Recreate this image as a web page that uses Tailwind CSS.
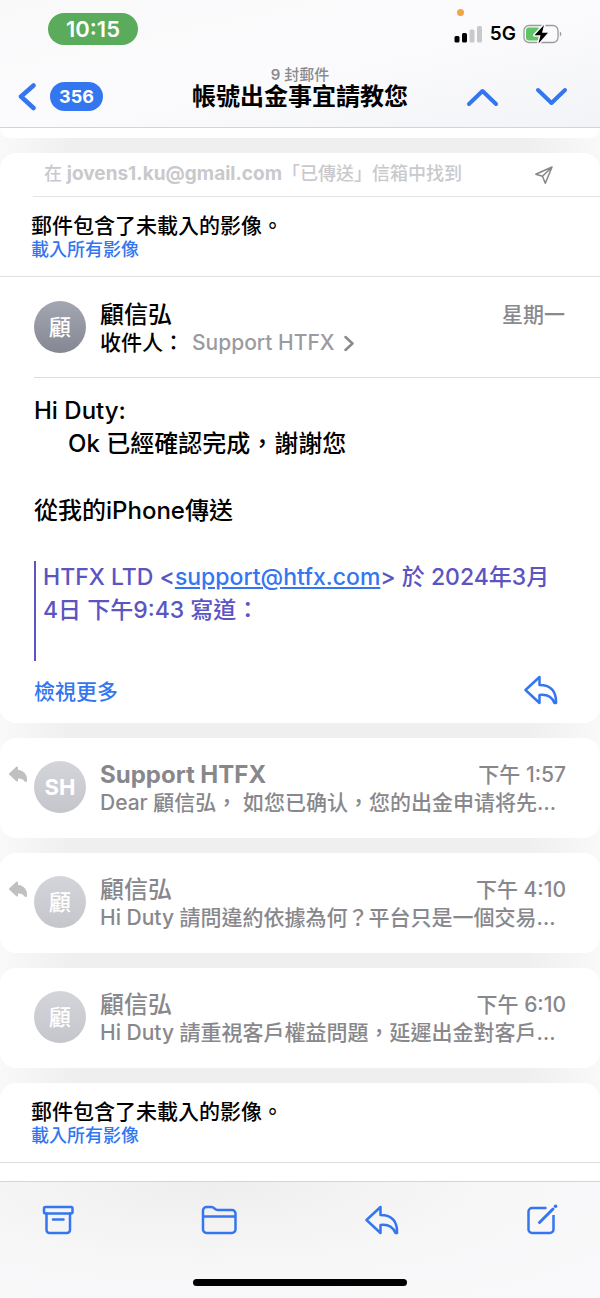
<!DOCTYPE html>
<html lang="zh-Hant">
<head>
  <meta charset="UTF-8" />
  <meta name="viewport" content="width=device-width, initial-scale=1.0" />
  <title>帳號出金事宜請教您</title>
  <script src="https://cdn.jsdelivr.net/npm/@tailwindcss/browser@4"></script>
</head>
<body class="h-screen flex flex-col bg-white text-black font-medium font-['Inter','Noto_Sans_CJK_TC',sans-serif]">

  <!-- Header -->
  <header class="shrink-0 border-b border-[#d4d4d6] bg-linear-to-br from-[#f9f9fa] via-[#fbfbfd] to-[#f3f4f7]">
    <!-- Status bar -->
    <div class="relative h-16 flex justify-between items-start pl-12 pr-[38px] pt-[13px]">
      <span class="w-[90px] h-8 rounded-full bg-[#5aab5b] text-white text-[22px] font-semibold flex items-center justify-center">10:15</span>
      <span class="absolute right-[136px] top-[9px] size-[7px] rounded-full bg-[#efa548]"></span>
      <div class="flex items-center gap-[7px] pt-2">
        <svg class="w-[29px] h-[18px]" viewBox="0 0 29 18">
          <rect x="0.5" y="11" width="5" height="6.5" rx="1.5" fill="#000" />
          <rect x="8" y="8" width="5" height="9.500" rx="1.5" fill="#000" />
          <rect x="15.500" y="4.500" width="5" height="13" rx="1.5" fill="#c9c9cb" />
          <rect x="23" y="1" width="5" height="16.500" rx="1.5" fill="#c9c9cb" />
        </svg>
        <span class="text-[19px] leading-[26px] font-semibold">5G</span>
        <svg class="w-[39px] h-5" viewBox="0 0 39 20">
          <rect x="1" y="1.500" width="34" height="17" rx="5" fill="none" stroke="#9c9c9e" stroke-width="1.300" />
          <path d="M36.800 7.500v5c2-.8 2-4.200 0-5z" fill="#9c9c9e" />
          <rect x="3" y="3.500" width="14" height="13" rx="3" fill="#62c466" />
          <path d="M21 1 11.500 11.200h6L15.500 19.500 25 8.800h-6z" fill="#000" stroke="#fafafc" stroke-width="3" stroke-linejoin="round" paint-order="stroke" />
        </svg>
      </div>
    </div>

    <!-- Navigation -->
    <div class="h-[63px] grid grid-cols-[1fr_auto_1fr] items-end px-[18px] pb-4">
      <button class="h-[29px] flex items-center gap-[13px]" aria-label="返回">
        <svg class="w-[19px] h-[29px]" viewBox="0 0 19 29" fill="none" stroke="#3476f0" stroke-width="4.500" stroke-linecap="round" stroke-linejoin="round"><path d="M15.500 3.500 3 14.500 15.500 26" /></svg>
        <span class="w-[53px] h-[29px] rounded-full bg-[#3476f0] text-white text-[18px] font-bold flex items-center justify-center">356</span>
      </button>
      <div class="text-center">
        <p class="text-[15px] leading-4 text-[#8a8a8e]"><span class="font-semibold">9</span> 封郵件</p>
        <h1 class="text-2xl leading-7 font-semibold">帳號出金事宜請教您</h1>
      </div>
      <div class="flex items-center justify-end gap-9 h-[28px] pr-[14px]">
        <button aria-label="上一封"><svg class="w-[33px] h-5" viewBox="0 0 33 20" fill="none" stroke="#3476f0" stroke-width="4" stroke-linecap="round" stroke-linejoin="round"><path d="M3 17 16.500 4 30 17" /></svg></button>
        <button aria-label="下一封"><svg class="w-[33px] h-5" viewBox="0 0 33 20" fill="none" stroke="#3476f0" stroke-width="4" stroke-linecap="round" stroke-linejoin="round"><path d="M3 3 16.500 16 30 3" /></svg></button>
      </div>
    </div>
  </header>

  <!-- Thread -->
  <main class="flex-1 min-h-0 overflow-hidden flex flex-col gap-[15px] bg-[linear-gradient(to_right,#f9f9f9,#efefef_12%,#efefef_88%,#f9f9f9)]">
    <div class="shrink-0 h-[10px] bg-white rounded-b-2xl"></div>

    <!-- Open message -->
    <article class="shrink-0 bg-white rounded-2xl">
      <div class="ml-[33px] h-11 flex items-center justify-between border-b border-[#e4e4e6] pl-[11px] pr-[46px] text-[#c9c9cc]">
        <p class="text-[18px] whitespace-nowrap">在 <span class="text-[19px] font-bold">jovens1.ku@gmail.com</span>「已傳送」信箱中找到</p>
        <svg class="w-5 h-5" viewBox="0 0 20 20" fill="none" stroke="#85858a" stroke-width="1.500" stroke-linejoin="round"><path d="M18 2 1.800 9.300 8.500 11.200 11.300 18.200zM18 2 8.500 11.200" /></svg>
      </div>
      <div class="h-20 px-[31px] pt-4 border-b border-[#e0e0e2]">
        <p class="text-[21px] leading-[26px]">郵件包含了未載入的影像。</p>
        <button class="block text-[18px] leading-[22px] text-[#3476f0]">載入所有影像</button>
      </div>
      <div class="ml-[34px] h-[101px] pt-6 pr-[35px] flex gap-[14px] border-b border-[#dcdcde]">
        <span class="shrink-0 size-[52px] rounded-full bg-linear-to-b from-[#a3a7b1] to-[#858892] text-white text-[22px] flex items-center justify-center">顧</span>
        <div class="flex-1">
          <div class="flex justify-between">
            <h2 class="text-2xl leading-7 font-medium">顧信弘</h2>
            <time class="text-[21px] leading-7 text-[#8a8a8e]">星期一</time>
          </div>
          <div class="flex items-center text-[21px] leading-7">
            <span>收件人：</span>
            <a href="#" class="ml-2 flex items-center gap-[9px] text-[#9b9b9f]">Support HTFX
              <svg class="w-[10px] h-[17px]" viewBox="0 0 10 17" fill="none" stroke="#8a8a8e" stroke-width="2.500" stroke-linecap="round" stroke-linejoin="round"><path d="M1.500 2 8.500 8.500 1.500 15" /></svg>
            </a>
          </div>
        </div>
      </div>

      <div class="px-[34px] pt-4 flex flex-col gap-[34px] text-[24px] leading-[33px]">
        <div>
          <p>Hi Duty:</p>
          <p class="pl-[34px]">Ok 已經確認完成，謝謝您</p>
        </div>
        <p>從我的iPhone傳送</p>
        <blockquote class="h-[100px] border-l-2 border-[#5b54c2] pl-[7px] pr-3 text-[23px] text-[#5b54c2]">HTFX LTD &lt;<a href="#" class="text-[#3476f0] underline underline-offset-2">support@htfx.com</a>&gt; 於 2024年3月4日 下午9:43 寫道：</blockquote>
      </div>
      <div class="h-[62px] flex items-center justify-between pl-[34px] pr-[42px]">
        <button class="text-[21px] text-[#3476f0]">檢視更多</button>
        <button class="pb-1" aria-label="回覆"><svg class="w-[34px] h-[30px]" viewBox="0 0 34 30" fill="none" stroke="#3476f0" stroke-width="2.500" stroke-linejoin="round"><path d="M15.500 2 1.500 15 15.500 28V20C24 19 28 22 30.500 28H32C32.500 17 27.500 10 15.500 10z" /></svg></button>
      </div>
    </article>

    <!-- Collapsed messages -->
    <article class="shrink-0 h-[100px] bg-white rounded-2xl pt-[23px] pl-2 pr-[34px] flex text-[#88888c]">
      <svg class="shrink-0 w-5 h-[17px] mt-[5px] mr-[6px]" viewBox="0 0 20 17" fill="#c0c0c3" stroke="#c0c0c3" stroke-width="2" stroke-linejoin="round"><path d="M9 1.500 2 8 9 14.500V11.500C13 11 15.500 12 17.500 15H18C18.500 9 15 5 9 4.800z" /></svg>
      <span class="shrink-0 size-[52px] mr-[14px] rounded-full bg-linear-to-b from-[#d4d5da] to-[#c5c6cc] text-white text-[22px] font-bold flex items-center justify-center">SH</span>
      <div class="flex-1 min-w-0">
        <div class="flex justify-between">
          <h2 class="text-2xl leading-7 font-bold">Support HTFX</h2>
          <time class="text-[21px] leading-7">下午 1:57</time>
        </div>
        <p class="text-[21px] leading-7 whitespace-nowrap">Dear 顧信弘， 如您已确认，您的出金申请将先…</p>
      </div>
    </article>

    <article class="shrink-0 h-[100px] bg-white rounded-2xl pt-[23px] pl-2 pr-[34px] flex text-[#88888c]">
      <svg class="shrink-0 w-5 h-[17px] mt-[5px] mr-[6px]" viewBox="0 0 20 17" fill="#c0c0c3" stroke="#c0c0c3" stroke-width="2" stroke-linejoin="round"><path d="M9 1.500 2 8 9 14.500V11.500C13 11 15.500 12 17.500 15H18C18.500 9 15 5 9 4.800z" /></svg>
      <span class="shrink-0 size-[52px] mr-[14px] rounded-full bg-linear-to-b from-[#d4d5da] to-[#c5c6cc] text-white text-[22px] flex items-center justify-center">顧</span>
      <div class="flex-1 min-w-0">
        <div class="flex justify-between">
          <h2 class="text-2xl leading-7">顧信弘</h2>
          <time class="text-[21px] leading-7">下午 4:10</time>
        </div>
        <p class="text-[21px] leading-7 whitespace-nowrap">Hi Duty 請問違約依據為何？平台只是一個交易…</p>
      </div>
    </article>

    <article class="shrink-0 h-[100px] bg-white rounded-2xl pt-[23px] px-[34px] flex text-[#88888c]">
      <span class="shrink-0 size-[52px] mr-[14px] rounded-full bg-linear-to-b from-[#d4d5da] to-[#c5c6cc] text-white text-[22px] flex items-center justify-center">顧</span>
      <div class="flex-1 min-w-0">
        <div class="flex justify-between">
          <h2 class="text-2xl leading-7">顧信弘</h2>
          <time class="text-[21px] leading-7">下午 6:10</time>
        </div>
        <p class="text-[21px] leading-7 whitespace-nowrap">Hi Duty 請重視客戶權益問題，延遲出金對客戶…</p>
      </div>
    </article>

    <!-- Next message -->
    <article class="flex-1 bg-white rounded-t-2xl">
      <div class="h-20 px-[31px] pt-4 border-b border-[#dcdcde]">
        <p class="text-[21px] leading-[26px]">郵件包含了未載入的影像。</p>
        <button class="block text-[18px] leading-[22px] text-[#3476f0]">載入所有影像</button>
      </div>
    </article>
  </main>

  <!-- Toolbar -->
  <footer class="shrink-0 border-t border-[#d4d4d6] bg-[radial-gradient(ellipse_at_35%_0%,#eeeeef,#f7f7f8_50%,#f9f9fb)]">
    <div class="flex items-center justify-between px-[42px] pt-[22px]">
      <button aria-label="封存"><svg class="w-8 h-8" viewBox="0 0 32 32" fill="none" stroke="#3476f0" stroke-width="2.500" stroke-linecap="round" stroke-linejoin="round"><rect x="2" y="3" width="28.500" height="6.500" rx="1.500" /><path d="M4.500 9.500V26a3 3 0 0 0 3 3h17.500a3 3 0 0 0 3-3V9.500M11 15.500h10.500" /></svg></button>
      <button aria-label="移動"><svg class="w-9 h-8" viewBox="0 0 36 32" fill="none" stroke="#3476f0" stroke-width="2.500" stroke-linejoin="round"><path d="M2 6.500a3.500 3.500 0 0 1 3.500-3.500h5c2.500 0 3.500 3 6 3h14.500a3.500 3.500 0 0 1 3.500 3.500v16a3.500 3.500 0 0 1-3.500 3.500H5.500A3.500 3.500 0 0 1 2 25.500zM2 12.500h32.500" /></svg></button>
      <button aria-label="回覆"><svg class="w-[34px] h-[30px]" viewBox="0 0 34 30" fill="none" stroke="#3476f0" stroke-width="2.500" stroke-linejoin="round"><path d="M15.500 2 1.500 15 15.500 28V20C24 19 28 22 30.500 28H32C32.500 17 27.500 10 15.500 10z" /></svg></button>
      <button aria-label="撰寫"><svg class="w-8 h-8" viewBox="0 0 32 32" fill="none" stroke="#3476f0" stroke-width="2.500" stroke-linejoin="round"><path d="M20.500 4H6a3.500 3.500 0 0 0-3.500 3.500V25.500A3.500 3.500 0 0 0 6 29H24a3.500 3.500 0 0 0 3.500-3.500V11" /><path d="M13.500 18.500 27 5" stroke-width="3" stroke-linecap="round" /><path d="M29.500 2.300h.1" stroke-width="3.500" stroke-linecap="round" /></svg></button>
    </div>
    <div class="mx-auto mt-[43px] mb-3 w-[214px] h-[7px] rounded-full bg-black"></div>
  </footer>
</body>
</html>
